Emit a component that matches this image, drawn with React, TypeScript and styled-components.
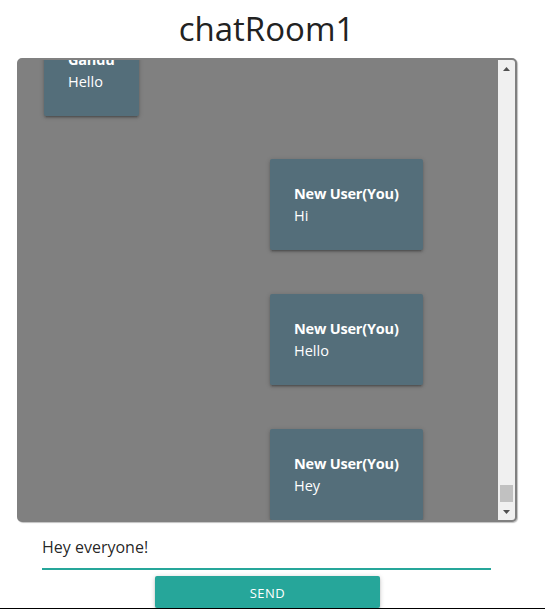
import React, { useLayoutEffect, useRef } from "react";
import styled, { createGlobalStyle } from "styled-components";

const Global = createGlobalStyle`
  html, body { margin: 0; padding: 0; background: #fff; }
  body { font-family: "Open Sans", "Noto Sans", sans-serif; color: rgba(0,0,0,0.87); }
  * { box-sizing: border-box; }
`;

const Page = styled.div`
  width: 533px;
  display: flex;
  flex-direction: column;
`;

const Title = styled.h1`
  margin: 0;
  height: 58px;
  padding-top: 4px;
  line-height: 50px;
  font-size: 33px;
  font-weight: 400;
  text-align: center;
  color: #222;
`;

const ChatFrame = styled.div`
  margin-left: 17px;
  width: 500px;
  height: 464px;
  display: flex;
  background: #808080;
  border: 2px solid #808080;
  border-radius: 5px;
  box-shadow: 1px 1px 1px rgba(0, 0, 0, 0.25);
  overflow: hidden;
`;

const ScrollArea = styled.div`
  flex: 1;
  overflow-y: auto;
  overflow-x: hidden;
  scrollbar-width: none;
  &::-webkit-scrollbar { display: none; }
`;

const Rail = styled.div`
  width: 17px;
  flex: none;
  display: flex;
  flex-direction: column;
  background: #f0f0f0;
`;

const ArrowButton = styled.div`
  height: 17px;
  flex: none;
  display: flex;
  justify-content: center;
  padding-top: 7px;
`;

const Track = styled.div`
  flex: 1;
  display: flex;
  flex-direction: column;
  justify-content: flex-end;
  padding: 0 2px 1px;
`;

const Thumb = styled.div`
  height: 17px;
  background: #c1c1c1;
`;

const MessageList = styled.div`
  display: flex;
  flex-direction: column;
  padding: 20px 0 0;
`;

const Row = styled.div<{ $mine: boolean; $gap: number }>`
  display: flex;
  margin-top: ${(p) => p.$gap}px;
  padding-left: ${(p) => (p.$mine ? "251px" : "25px")};
`;

const Card = styled.div`
  background: #546e7a;
  color: #fff;
  padding: 24px;
  border-radius: 2px;
  font-size: 14.5px;
  line-height: 21.5px;
  box-shadow: 0 2px 2px 0 rgba(0, 0, 0, 0.14), 0 3px 1px -2px rgba(0, 0, 0, 0.12),
    0 1px 5px 0 rgba(0, 0, 0, 0.2);
`;

const Sender = styled.div`
  font-weight: 700;
  white-space: nowrap;
  letter-spacing: -0.2px;
`;

const Body = styled.div`
  white-space: nowrap;
`;

const InputField = styled.input`
  margin: 6px 0 0 42px;
  width: 449px;
  height: 37px;
  box-sizing: content-box;
  padding: 0 0 3px;
  border: none;
  border-bottom: 1px solid #26a69a;
  box-shadow: 0 1px 0 0 #26a69a;
  outline: none;
  background: transparent;
  font-family: "Open Sans", "Noto Sans", sans-serif;
  font-size: 16px;
  color: rgba(0, 0, 0, 0.87);
  caret-color: #000;
`;

const SendButton = styled.button`
  margin: 7px 0 0 155px;
  width: 225px;
  height: 32px;
  border: none;
  border-radius: 2px;
  background: #26a69a;
  color: #fff;
  font-family: "Open Sans", "Noto Sans", sans-serif;
  font-size: 13px;
  letter-spacing: 0.5px;
  text-transform: uppercase;
  line-height: 35px;
  padding: 0;
  overflow: hidden;
  box-shadow: 0 2px 2px 0 rgba(0, 0, 0, 0.14), 0 3px 1px -2px rgba(0, 0, 0, 0.12),
    0 1px 5px 0 rgba(0, 0, 0, 0.2);
  cursor: pointer;
`;

const BottomRule = styled.div`
  width: 545px;
  height: 1px;
  background: #000;
`;

type Msg = { sender: string; text: string; mine: boolean };

const messages: Msg[] = [
  { sender: "Gandu", text: "Hello", mine: false },
  { sender: "New User(You)", text: "Hi", mine: true },
  { sender: "New User(You)", text: "Hello", mine: true },
  { sender: "New User(You)", text: "Hey", mine: true },
];

const Arrow = ({ up }: { up: boolean }) => (
  <svg width="7" height="4" viewBox="0 0 7 4">
    <polygon points={up ? "0,4 3.5,0 7,4" : "0,0 3.5,4 7,0"} fill="#505050" />
  </svg>
);

export default function App() {
  const boxRef = useRef<HTMLDivElement>(null);
  const inputRef = useRef<HTMLInputElement>(null);

  useLayoutEffect(() => {
    if (boxRef.current) boxRef.current.scrollTop = boxRef.current.scrollHeight;
    if (inputRef.current) {
      inputRef.current.focus();
      inputRef.current.setSelectionRange(12, 12);
    }
  }, []);

  return (
    <Page>
      <Global />
      <Title>chatRoom1</Title>
      <ChatFrame>
        <ScrollArea ref={boxRef}>
          <MessageList>
            {messages.map((m, i) => (
              <Row key={i} $mine={m.mine} $gap={i === 0 ? 0 : i === 1 ? 43 : 44}>
                <Card>
                  <Sender>{m.sender}</Sender>
                  <Body>{m.text}</Body>
                </Card>
              </Row>
            ))}
          </MessageList>
        </ScrollArea>
        <Rail>
          <ArrowButton>
            <Arrow up />
          </ArrowButton>
          <Track>
            <Thumb />
          </Track>
          <ArrowButton>
            <Arrow up={false} />
          </ArrowButton>
        </Rail>
      </ChatFrame>
      <InputField ref={inputRef} defaultValue="Hey everyone!" />
      <SendButton>Send</SendButton>
      <BottomRule />
    </Page>
  );
}
